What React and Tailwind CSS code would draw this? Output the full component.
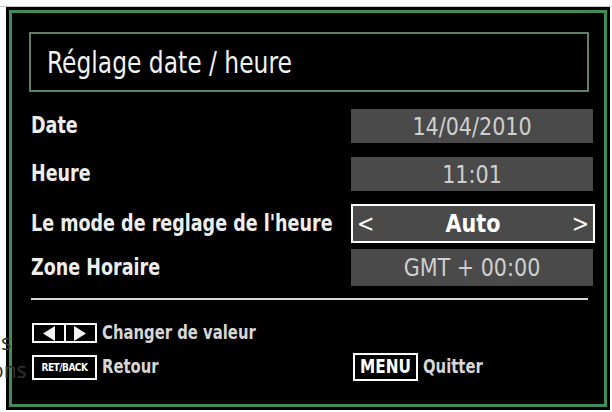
export default function App() {
  const font = { fontFamily: '"DejaVu Sans", sans-serif' };
  const label = "text-[19.5px] font-bold text-[#eeeeee] whitespace-nowrap inline-block scale-y-[1.18]";
  const foot = "text-[16.5px] font-bold text-[#d6d6d6] whitespace-nowrap inline-block scale-y-[1.22]";
  return (
    <div className="relative w-[612px] h-[412px] bg-white overflow-hidden font-stretch-condensed" style={font}>
      <div className="absolute left-0 right-0 top-[6px] h-px bg-[#c8c8c8]" />
      <div className="ml-[6px] pt-[7px]">
        <div className="w-[604px] h-[403px] bg-black p-[3px]">
          <div className="h-full border-[3px] border-[#3f8c58] flex flex-col">
            <div className="ml-[17px] mr-[15px] mt-[19px] h-[60px] border-2 border-[#5f8068] flex items-center pl-[16px]">
              <span className="text-[26px] text-[#f2f2f2] leading-none whitespace-nowrap inline-block scale-y-[1.18]">Réglage date / heure</span>
            </div>

            <div className="mt-[17px] flex flex-col pl-[19px] pr-[11px]">
              <div className="flex items-center justify-between h-[34px]">
                <span className={label}>Date</span>
                <div className="w-[242px] h-[34px] bg-[#4a4a4a] flex items-center justify-center text-[23px] text-[#cfcfcf]"><span className="inline-block scale-y-[1.1]">14/04/2010</span></div>
              </div>
              <div className="flex items-center justify-between h-[34px] mt-[14px]">
                <span className={label}>Heure</span>
                <div className="w-[242px] h-[34px] bg-[#4a4a4a] flex items-center justify-center text-[23px] text-[#cfcfcf]"><span className="inline-block scale-y-[1.1]">11:01</span></div>
              </div>
              <div className="flex items-center justify-between h-[39px] mt-[13px]">
                <span className={label}>Le mode de reglage de l'heure</span>
                <div className="w-[244px] h-[39px] -mr-[2px] bg-[#4a4a4a] border-2 border-white flex items-center justify-between px-[4px] text-[23px] text-white">
                  <span className="inline-block scale-y-[1.1]">&lt;</span>
                  <span className="font-bold inline-block scale-y-[1.1]">Auto</span>
                  <span className="inline-block scale-y-[1.1]">&gt;</span>
                </div>
              </div>
              <div className="flex items-center justify-between h-[37px] mt-[6px]">
                <span className={label}>Zone Horaire</span>
                <div className="w-[242px] h-[37px] bg-[#4a4a4a] flex items-center justify-center text-[23px] text-[#cfcfcf]"><span className="inline-block scale-y-[1.1]">GMT + 00:00</span></div>
              </div>
            </div>

            <div className="ml-[19px] mr-[16px] mt-[12px] h-[2px] bg-[#d8d8d8]" />

            <div className="mt-[23px] pl-[20px] pr-[11px] flex flex-col">
              <div className="flex items-center h-[20px]">
                <div className="w-[65px] h-[20px] border-2 border-white flex">
                  <div className="flex-1 flex items-center justify-center border-r-2 border-white">
                    <svg width="14" height="15" viewBox="0 0 14 15"><polygon points="13,0 13,15 1,7.5" fill="#f4f4f4" /></svg>
                  </div>
                  <div className="flex-1 flex items-center justify-center">
                    <svg width="14" height="15" viewBox="0 0 14 15"><polygon points="1,0 1,15 13,7.5" fill="#f4f4f4" /></svg>
                  </div>
                </div>
                <span className={`ml-[5px] ${foot}`}>Changer de valeur</span>
              </div>
              <div className="flex items-center h-[26px] mt-[11px]">
                <div className="w-[321px] flex items-center">
                  <div className="w-[65px] h-[25px] border-2 border-white flex items-center justify-center">
                    <span className="text-[10px] font-bold text-white tracking-tighter whitespace-nowrap">RET/BACK</span>
                  </div>
                  <span className={`ml-[5px] ${foot}`}>Retour</span>
                </div>
                <div className="w-[65px] h-[28px] border-2 border-white flex items-center justify-center">
                  <span className="text-[17px] font-bold text-white inline-block scale-y-[1.1]">MENU</span>
                </div>
                <span className={`ml-[5px] ${foot}`}>Quitter</span>
              </div>
            </div>
          </div>
        </div>
      </div>
      <span className="absolute left-[1px] top-[332px] text-[21px] text-[#333333] leading-none font-stretch-normal" style={{ fontFamily: '"Open Sans", sans-serif' }}>s</span>
      <span className="absolute left-[-9px] top-[360px] text-[21px] text-[#333333] leading-none font-stretch-normal" style={{ fontFamily: '"Open Sans", sans-serif' }}>ons</span>
    </div>
  );
}
